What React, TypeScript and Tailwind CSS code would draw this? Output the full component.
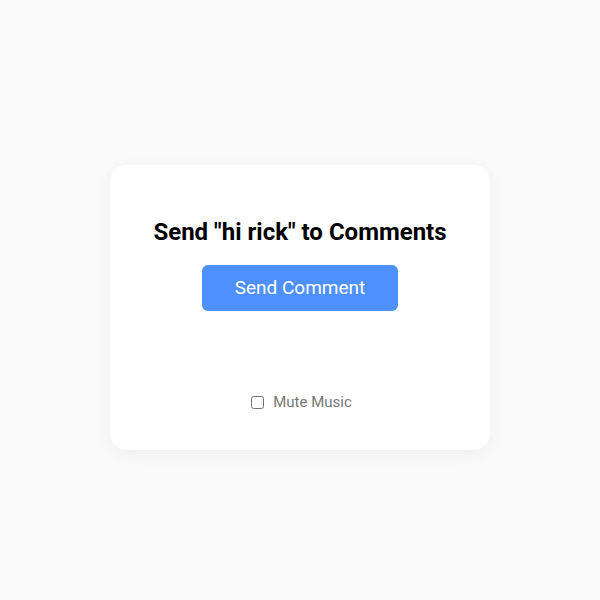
import { useState } from 'react';

export default function App() {
  const [muted, setMuted] = useState(false);

  return (
    <div className="min-h-screen w-full bg-[#fafafa] flex items-center justify-center pt-[15px] font-['Roboto',sans-serif]">
      <div className="w-[380px] h-[285px] bg-white rounded-2xl shadow-[0_4px_16px_rgba(0,0,0,0.06)] flex flex-col items-center pt-[51px]">
        <h1 className="text-[24px] leading-[32px] font-bold text-black">Send "hi rick" to Comments</h1>
        <button className="mt-[17px] w-[196px] h-[46px] rounded-md bg-[#4d90fe] text-white text-[19px]">
          Send Comment
        </button>
        <label className="mt-[79px] ml-[3px] flex items-center gap-[9px] text-[15px] leading-[24px] text-[#777]">
          <input
            type="checkbox"
            checked={muted}
            onChange={(e) => setMuted(e.target.checked)}
            className="m-0 w-[13px] h-[13px]"
          />
          Mute Music
        </label>
      </div>
    </div>
  );
}
